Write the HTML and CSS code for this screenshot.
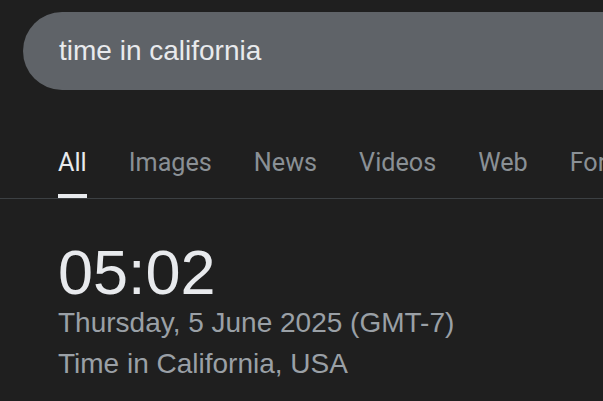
FILE: index.html
```html
<!DOCTYPE html>
<html lang="en">
<head>
<meta charset="utf-8">
<link rel="stylesheet" href="styles.css">
</head>
<body>
  <div class="search">
    <span class="query">time in california</span>
  </div>
  <nav class="tabs">
    <a class="tab active">All</a>
    <a class="tab">Images</a>
    <a class="tab">News</a>
    <a class="tab">Videos</a>
    <a class="tab">Web</a>
    <a class="tab">For</a>
  </nav>
  <section class="result">
    <div class="clock">05:02</div>
    <div class="date">Thursday, 5 June 2025 (GMT-7)</div>
    <div class="place">Time in California, USA</div>
  </section>
</body>
</html>
```
FILE: styles.css
```css
html, body {
  margin: 0;
  padding: 0;
  background: #1f1f1f;
  overflow: hidden;
}
body {
  width: 603px;
  height: 401px;
  font-family: "Liberation Sans", Arial, sans-serif;
}
.search {
  margin: 12px 0 0 23px;
  height: 78px;
  border-radius: 39px 0 0 39px;
  background: #5f6368;
  padding-left: 36px;
  line-height: 78px;
  white-space: nowrap;
}
.query {
  font-size: 28px;
  color: #e8eaed;
}
.tabs {
  display: flex;
  gap: 42px;
  padding: 59px 0 0 58px;
  border-bottom: 1px solid #3c4043;
  white-space: nowrap;
  overflow: hidden;
}
.tab {
  font-family: Roboto, "Liberation Sans", sans-serif;
  font-size: 25.2px;
  line-height: 28px;
  color: #8a9095;
  padding-bottom: 17px;
  border-bottom: 4px solid transparent;
  flex: none;
}
.tab.active {
  color: #e8eaed;
  border-bottom-color: #e8eaed;
}
.result {
  padding: 43px 0 0 58px;
}
.clock {
  font-size: 63px;
  line-height: 60px;
  color: #e8eaed;
}
.date, .place {
  font-size: 28px;
  line-height: 41px;
  color: #9aa0a6;
}
```
